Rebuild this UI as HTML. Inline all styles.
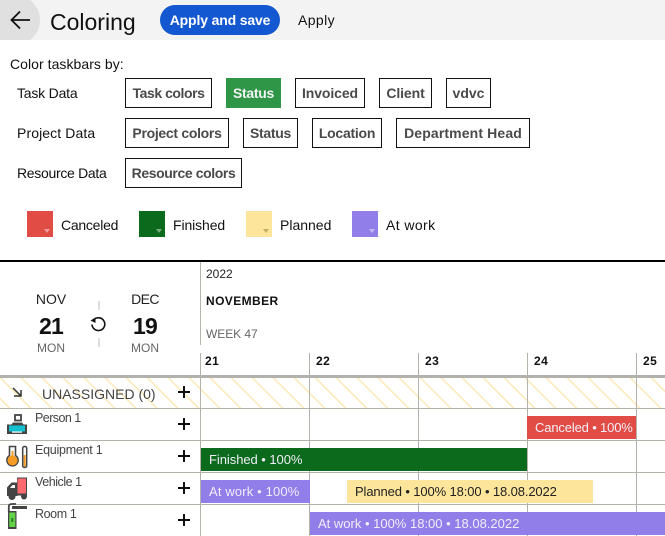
<!DOCTYPE html>
<html>
<head>
<meta charset="utf-8">
<style>
html,body{margin:0;padding:0;background:#fff}
body{width:665px;height:536px;position:relative;overflow:hidden;font-family:"Liberation Sans",sans-serif;color:#1a1a1a}
.t{position:absolute;white-space:nowrap;font-size:14px;line-height:18px}
.b{position:absolute;box-sizing:border-box;border:1px solid #111;height:30px;line-height:28px;text-align:center;font-size:14px;font-weight:bold;color:#4a4a4a;background:#fff;white-space:nowrap}
.s{position:absolute;width:26px;height:26px;top:211px}
.s:after{content:"";position:absolute;left:17px;top:18px;border-left:3px solid transparent;border-right:3px solid transparent;border-top:4px solid rgba(255,255,255,.45)}
.s.y:after{border-top-color:rgba(150,130,60,.55)}
.v{position:absolute;width:1px;background:#b5b2ac}
.h{position:absolute;left:0;width:665px;height:1px;background:#b5b2ac}
.bar{position:absolute;height:23px;line-height:23px;font-size:13px;white-space:nowrap;color:#f0eef8;box-sizing:border-box;overflow:hidden}
.c{text-align:center;width:60px}
.n{font-size:23px;line-height:26px;font-weight:bold;color:#111;letter-spacing:-.8px}
.p{position:absolute;left:178px;width:12px;height:12px}
.p:before{content:"";position:absolute;left:0;top:5px;width:12px;height:2px;background:#111}
.p:after{content:"";position:absolute;left:5px;top:0;width:2px;height:12px;background:#111}
.r{font-size:12.5px;color:#444;left:35px}
.d{font-size:12px;line-height:16px;font-weight:bold;color:#111;letter-spacing:.4px;top:353px}
</style>
</head>
<body>
<div style="position:absolute;left:0;top:0;width:665px;height:40px;background:#f3f3f3;overflow:hidden">
<div style="position:absolute;left:-10px;top:-5px;width:50px;height:50px;border-radius:50%;background:#e0e0e0"></div>
<svg style="position:absolute;left:0;top:0" width="40" height="40"><path d="M30 20H11.5M20 11.5L11.5 20L20 28.5" fill="none" stroke="#111" stroke-width="1.8"/></svg>
</div>
<div class="t" style="left:50px;top:8px;font-size:23px;line-height:28px;color:#111">Coloring</div>
<div style="position:absolute;left:160px;top:5px;width:120px;height:30px;border-radius:15px;background:#1358d0;color:#fff;font-size:14px;font-weight:bold;line-height:30px;text-align:center;letter-spacing:-.15px">Apply and save</div>
<div class="t" style="left:298px;top:11px;color:#111;letter-spacing:.4px">Apply</div>

<div class="t" style="left:10px;top:55px;color:#111;letter-spacing:.05px">Color taskbars by:</div>
<div class="t" style="left:17px;top:84px;color:#111;letter-spacing:-.2px">Task Data</div>
<div class="t" style="left:17px;top:124px;color:#111;letter-spacing:.1px">Project Data</div>
<div class="t" style="left:17px;top:164px;color:#111;letter-spacing:-.3px">Resource Data</div>

<div class="b" style="left:125px;top:78px;width:87px;letter-spacing:-.45px">Task colors</div>
<div class="b" style="left:226px;top:78px;width:55px;background:#2f9648;border-color:#2f9648;color:#f2f2f2;letter-spacing:-.3px">Status</div>
<div class="b" style="left:295px;top:78px;width:70px;letter-spacing:-.1px">Invoiced</div>
<div class="b" style="left:379px;top:78px;width:53px;letter-spacing:-.1px">Client</div>
<div class="b" style="left:446px;top:78px;width:45px">vdvc</div>

<div class="b" style="left:125px;top:118px;width:104px;letter-spacing:-.3px">Project colors</div>
<div class="b" style="left:243px;top:118px;width:55px;letter-spacing:-.3px">Status</div>
<div class="b" style="left:312px;top:118px;width:70px;letter-spacing:-.25px">Location</div>
<div class="b" style="left:396px;top:118px;width:134px;letter-spacing:.13px">Department Head</div>

<div class="b" style="left:125px;top:158px;width:117px;letter-spacing:-.4px">Resource colors</div>

<div class="s" style="left:27px;background:#e14d45"></div>
<div class="t" style="left:61px;top:216px;color:#111;letter-spacing:-.25px">Canceled</div>
<div class="s" style="left:139px;background:#0b6a1b"></div>
<div class="t" style="left:173px;top:216px;color:#111;letter-spacing:-.1px">Finished</div>
<div class="s y" style="left:246px;background:#fde59b"></div>
<div class="t" style="left:280px;top:216px;color:#111">Planned</div>
<div class="s" style="left:352px;background:#917ee8"></div>
<div class="t" style="left:386px;top:216px;color:#111;letter-spacing:.4px">At work</div>

<div style="position:absolute;left:0;top:260px;width:665px;height:2px;background:#000"></div>
<div class="v" style="left:200px;top:262px;height:83px"></div>

<div class="t c" style="left:21px;top:290px;font-size:14px;color:#222">NOV</div>
<div class="t c n" style="left:21px;top:313px">21</div>
<div class="t c" style="left:21px;top:340px;font-size:12px;line-height:16px;color:#666">MON</div>
<div class="t c" style="left:115px;top:290px;font-size:14px;color:#222;letter-spacing:-.6px">DEC</div>
<div class="t c n" style="left:115px;top:313px">19</div>
<div class="t c" style="left:115px;top:340px;font-size:12px;line-height:16px;color:#666">MON</div>
<div style="position:absolute;left:98px;top:301px;width:2px;height:9px;background:#ddd"></div>
<div style="position:absolute;left:98px;top:338px;width:2px;height:9px;background:#ddd"></div>
<svg style="position:absolute;left:89px;top:315px" width="18" height="18"><path d="M5 4.5A6.4 6.4 0 1 1 3 9.5" fill="none" stroke="#111" stroke-width="1.6"/><path d="M1.5 5.5L6.5 2.5L6.5 8Z" fill="#111"/></svg>

<div class="t" style="left:206px;top:266px;font-size:12px;line-height:16px;color:#222">2022</div>
<div class="t" style="left:206px;top:293px;font-size:12px;line-height:16px;font-weight:bold;color:#111;letter-spacing:.4px">NOVEMBER</div>
<div class="t" style="left:206px;top:326px;font-size:12px;line-height:16px;color:#666;letter-spacing:-.05px">WEEK 47</div>

<div class="t d" style="left:205px">21</div>
<div class="t d" style="left:316px">22</div>
<div class="t d" style="left:425px">23</div>
<div class="t d" style="left:534px">24</div>
<div class="t d" style="left:643px">25</div>

<svg style="position:absolute;left:0;top:378px" width="665" height="30">
<defs><pattern id="hp" width="21" height="21" patternUnits="userSpaceOnUse" patternTransform="translate(0 -0.5)"><path d="M-2 -2L23 23M-23 -2L2 23M19 -2L44 23" stroke="#fde8bb" stroke-width="1.6" fill="none"/></pattern></defs>
<rect width="665" height="30" fill="url(#hp)"/>
</svg>

<div style="position:absolute;left:0;top:375px;width:665px;height:3px;background:#b3b1ac"></div>
<div class="h" style="top:408px"></div>
<div class="h" style="top:440px"></div>
<div class="h" style="top:472px"></div>
<div class="h" style="top:504px"></div>

<div class="v" style="left:200px;top:353px;height:183px"></div>
<div class="v" style="left:309px;top:353px;height:183px"></div>
<div class="v" style="left:418px;top:353px;height:183px"></div>
<div class="v" style="left:527px;top:353px;height:183px"></div>
<div class="v" style="left:636px;top:353px;height:183px"></div>

<svg style="position:absolute;left:10px;top:385px" width="14" height="14"><path d="M3 3L11 11M4 11H11V5" fill="none" stroke="#333" stroke-width="1.5"/></svg>
<div class="t" style="left:42px;top:385px;font-size:14px;color:#444">UNASSIGNED (0)</div>
<div class="p" style="left:178px;top:386px"></div>
<div class="p" style="left:178px;top:418px"></div>
<div class="p" style="left:178px;top:450px"></div>
<div class="p" style="left:178px;top:482px"></div>
<div class="p" style="left:178px;top:514px"></div>

<div class="t r" style="top:409px;letter-spacing:-.55px">Person 1</div>
<div class="t r" style="top:441px;letter-spacing:-.25px">Equipment 1</div>
<div class="t r" style="top:473px;letter-spacing:-.45px">Vehicle 1</div>
<div class="t r" style="top:505px;letter-spacing:-.4px">Room 1</div>

<svg style="position:absolute;left:0;top:408px" width="34" height="128">
<!-- person -->
<rect x="15" y="7" width="6" height="5.5" fill="#fff" stroke="#444" stroke-width="1.8"/>
<path d="M13 14.5H22L24 17H11Z" fill="#444"/>
<rect x="7" y="16.5" width="20" height="9.5" fill="#444"/>
<rect x="9" y="17.5" width="16" height="6" fill="#14bfd0"/>
<rect x="12" y="23.5" width="10" height="1.2" fill="#fff"/>
<!-- equipment -->
<path d="M9.5 38.5H15.5V47.5A5.6 5.6 0 1 1 9.5 47.5Z" fill="#fff" stroke="#444" stroke-width="1.6"/>
<circle cx="12.5" cy="52.5" r="5" fill="#f59b23"/>
<rect x="11.5" y="43" width="2" height="6" fill="#f59b23"/>
<rect x="22.7" y="38.5" width="4" height="21" rx="1.8" fill="#fff" stroke="#444" stroke-width="1.5"/>
<rect x="23.7" y="47" width="2" height="11.5" fill="#f59b23"/>
<!-- vehicle -->
<path d="M7 88V79.5L11.5 74.5H17.5V88Z" fill="#444"/>
<path d="M10 80L12.5 77H15V80Z" fill="#fff"/>
<rect x="17" y="69.5" width="10" height="18" fill="#444"/>
<rect x="17.5" y="70.5" width="8.5" height="15" fill="#fb6a6e"/>
<circle cx="12" cy="88.5" r="3.5" fill="#444"/>
<circle cx="24" cy="88.5" r="3" fill="#444"/>
<!-- room -->
<path d="M8.8 104V98.5Q8.8 96 12 96H16" fill="none" stroke="#444" stroke-width="1.8"/>
<rect x="12" y="98" width="15" height="3" fill="#444"/>
<rect x="8" y="103" width="8.5" height="18" fill="#444"/>
<rect x="9.3" y="104.5" width="6" height="14.5" fill="#62d44a"/>
<rect x="11.3" y="110" width="2" height="4" fill="#2c7a22"/>
</svg>

<div class="bar" style="left:527px;top:416px;width:109px;background:#e14d45;padding-left:8px;letter-spacing:-.15px">Canceled • 100%</div>
<div class="bar" style="left:201px;top:448px;width:326px;background:#0b6a1b;padding-left:8px;letter-spacing:-.05px">Finished • 100%</div>
<div class="bar" style="left:201px;top:480px;width:109px;background:#917ee8;padding-left:8px;letter-spacing:.15px">At work • 100%</div>
<div class="bar" style="left:347px;top:480px;width:246px;background:#fde59b;padding-left:8px;color:#222;letter-spacing:-.12px">Planned • 100% 18:00 • 18.08.2022</div>
<div class="bar" style="left:310px;top:512px;width:355px;background:#917ee8;padding-left:8px">At work • 100% 18:00 • 18.08.2022</div>
</body>
</html>
